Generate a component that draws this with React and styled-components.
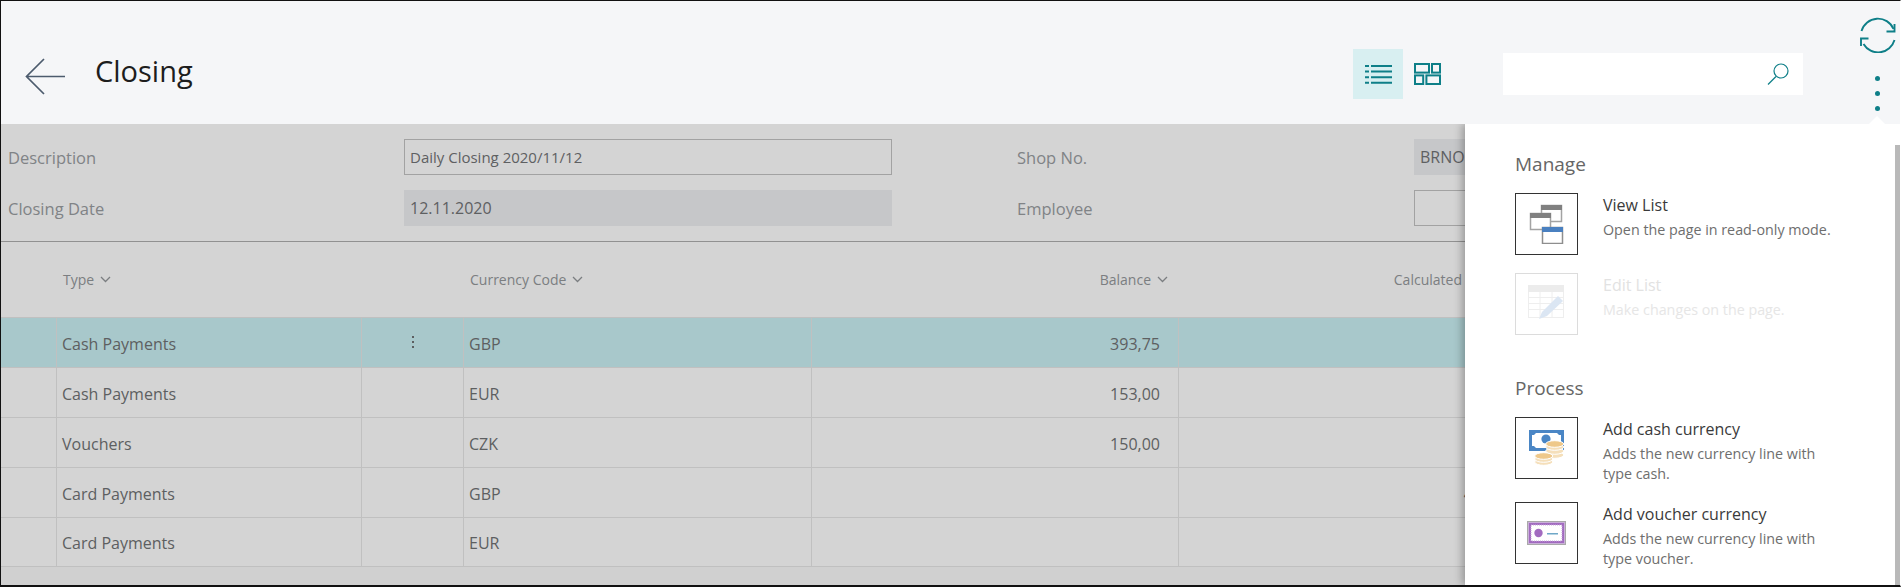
import styled, { createGlobalStyle } from 'styled-components'

const GlobalStyle = createGlobalStyle`
    * { box-sizing: border-box; }
    body {
        margin: 0;
        background: white;
        font-family: "Open Sans", "Liberation Sans", sans-serif;
    }
`

const Frame = styled.div`
    position: relative;
    width: 1901px;
    height: 587px;
    border-style: solid;
    border-color: #111;
    border-width: 1px 1px 2px 1px;
    border-right-color: white;
    background: #d4d4d4;
    overflow: hidden;
`

const Header = styled.header`
    position: relative;
    z-index: 2;
    display: flex;
    align-items: flex-start;
    height: 123px;
    background: #f5f6f8;
`
const BackButton = styled.div`
    display: flex;
    margin: 57px 29px 0 24px;
`
const Title = styled.h1`
    margin: 48px 0 0;
    font-size: 29px;
    line-height: 44px;
    font-weight: 400;
    color: #1d1d1d;
`
const ViewSwitch = styled.div`
    display: flex;
    align-items: center;
    gap: 11px;
    margin: 48px 0 0 auto;
`
const ViewButton = styled.div`
    display: flex;
    align-items: center;
    justify-content: center;
    width: ${p => p.$active ? '50px' : '27px'};
    height: 50px;
    background: ${p => p.$active ? '#d8eff1' : 'transparent'};
`
const Search = styled.div`
    display: flex;
    align-items: center;
    justify-content: flex-end;
    width: 300px;
    height: 42px;
    margin: 52px 57px 0 62px;
    padding-right: 14px;
    background: white;
`
const SyncColumn = styled.div`
    position: relative;
    display: flex;
    flex-direction: column;
    align-items: center;
    width: 35px;
    margin: 16px 5px 0 0;
`
const Dots = styled.div`
    display: flex;
    flex-direction: column;
    gap: 10px;
    margin-top: 23px;
    &::after {
        content: '';
        position: absolute;
        left: 9px;
        top: 99px;
        border-left: 8px solid transparent;
        border-right: 8px solid transparent;
        border-bottom: 8px solid white;
    }
`
const Dot = styled.span`
    width: 5px;
    height: 5px;
    border-radius: 50%;
    background: #0e7f88;
`

const Form = styled.div`
    display: grid;
    grid-template-columns: 396px 488px 125px 397px 488px;
    grid-auto-rows: 36px;
    row-gap: 15px;
    align-items: center;
    width: 1900px;
    padding: 15px 0 15px 7px;
    border-bottom: 1px solid #919191;
    height: 118px;
`
const Label = styled.div`
    font-size: 16.5px;
    color: #808386;
`
const Field = styled.div`
    display: flex;
    align-items: center;
    height: 36px;
    padding-left: 5px;
    font-size: ${p => p.$readOnly ? '16px' : '15px'};
    color: #5e6062;
    border: 1px solid ${p => p.$readOnly ? '#c6c7c9' : '#a2a2a2'};
    background: ${p => p.$readOnly ? '#c6c7c9' : 'transparent'};
`

const Grid = styled.div`
    display: flex;
    flex-direction: column;
`
const Row = styled.div`
    display: grid;
    grid-template-columns: 56px 305px 102px 348px 367px 367px;
    height: 50px;
    width: 1900px;
    background: ${p => p.$selected ? '#a8c8cb' : '#d4d4d4'};
    &:last-child { height: 49px; }
`
const HeadRow = styled(Row)`
    height: 76px;
    border-bottom: 1px solid #c0c0c0;
`
const HeadCell = styled.div`
    display: flex;
    align-items: center;
    justify-content: ${p => p.$right ? 'flex-end' : 'flex-start'};
    gap: 6px;
    padding: 0 ${p => p.$right ? '11px' : '0'} 0 ${p => p.$right ? '0' : '6px'};
    font-size: 14px;
    white-space: nowrap;
    color: #7b7e81;
`
const Cell = styled.div`
    display: flex;
    align-items: center;
    justify-content: ${p => p.$right ? 'flex-end' : 'flex-start'};
    padding: 2px ${p => p.$right ? '18px' : '0'} 0 ${p => p.$right ? '0' : '5px'};
    font-size: 16px;
    color: #5d5f61;
    border-right: 1px solid #c0c0c0;
    border-bottom: 1px solid #c0c0c0;
`
const MoreCell = styled(Cell)`
    justify-content: center;
    padding: 0 0 2px;
    gap: 3px;
    flex-direction: column;
`
const SmallDot = styled.span`
    width: 2px;
    height: 2px;
    background: #5d5f61;
`
const GridFooter = styled.div`
    height: 18px;
    background: #d0d0d0;
`

const Panel = styled.aside`
    position: absolute;
    z-index: 1;
    top: 123px;
    right: 0;
    bottom: 0;
    width: 435px;
    display: flex;
    background: white;
    box-shadow: -3px 0 8px rgba(0, 0, 0, 0.28);
`
const PanelBody = styled.div`
    flex: 1;
    padding: 28px 0 0 50px;
`
const Scrollbar = styled.div`
    width: 5px;
    margin-top: 21px;
    background: #b9b9b9;
`
const Section = styled.section`
    margin-bottom: 41px;
`
const SectionTitle = styled.h2`
    margin: 0 0 17px;
    font-size: 19px;
    line-height: 24px;
    font-weight: 400;
    color: #666;
`
const Action = styled.div`
    display: flex;
    align-items: flex-start;
    gap: 25px;
    margin-bottom: 18px;
`
const Tile = styled.div`
    flex: none;
    display: flex;
    align-items: center;
    justify-content: center;
    width: 63px;
    height: 62px;
    border: 1px solid ${p => p.$disabled ? '#dcdcdc' : '#333'};
`
const ActionText = styled.div`
    width: 232px;
`
const ActionTitle = styled.div`
    font-size: 16px;
    line-height: 24px;
    margin-bottom: 3px;
    color: ${p => p.$disabled ? '#e2e2e2' : '#3a3a3a'};
`
const ActionDesc = styled.div`
    font-size: 14.3px;
    line-height: 20px;
    color: ${p => p.$disabled ? '#e6e6e6' : '#6e6e6e'};
`

const Chevron = () => (
    <svg width="11" height="7" viewBox="0 0 11 7" fill="none" stroke="#7b7e81" strokeWidth="1.3">
        <path d="M1 1l4.5 4.5L10 1" />
    </svg>
)

const BackArrow = () => (
    <svg width="41" height="37" viewBox="0 0 41 37" fill="none" stroke="#4c5b6d" strokeWidth="1.7">
        <path d="M40 18.5H2M19 1L1.5 18.5 19 36" />
    </svg>
)

const ListIcon = () => (
    <svg width="27" height="20" viewBox="0 0 27 20" fill="#0e7f88">
        <path d="M0 1h4v2H0zM6 1h21v2H6zM0 6.6h4v2H0zM6 6.6h21v2H6zM0 12.2h4v2H0zM6 12.2h21v2H6zM0 17.8h4v2H0zM6 17.8h21v2H6z" />
    </svg>
)

const TilesIcon = () => (
    <svg width="27" height="22" viewBox="0 0 27 22" fill="none" stroke="#0e7f88" strokeWidth="2">
        <rect x="1" y="1" width="14" height="8.6" />
        <rect x="18" y="1" width="8" height="8.6" />
        <rect x="1" y="12.4" width="8.2" height="8.6" />
        <rect x="12.4" y="12.4" width="13.6" height="8.6" />
    </svg>
)

const SearchIcon = () => (
    <svg width="22" height="22" viewBox="0 0 22 22" fill="none" stroke="#0e7f88" strokeWidth="1.2">
        <circle cx="14" cy="8" r="7" />
        <path d="M9 13.5L1 21.5" />
    </svg>
)

const SyncIcon = () => (
    <svg width="36" height="36" viewBox="0 0 36 36" fill="none" stroke="#0e7f88" strokeWidth="1.9">
        <path d="M1.5 14A17 17 0 0 1 33.5 12" />
        <path d="M26.5 14.5H34.5V7" />
        <path d="M34.5 23A17 17 0 0 1 3.5 27" />
        <path d="M8.5 21.5H1V29" />
    </svg>
)

const ViewListArt = () => (
    <svg width="36" height="40" viewBox="0 0 36 40">
        <rect x="12.5" y="1.5" width="20" height="16" fill="white" stroke="#a3a3a3" strokeWidth="1.5" />
        <rect x="12" y="1" width="21" height="5" fill="#808080" />
        <rect x="1.5" y="9.5" width="20" height="16" fill="white" stroke="#a3a3a3" strokeWidth="1.5" />
        <rect x="1" y="9" width="21" height="5" fill="#808080" />
        <rect x="13.5" y="23.5" width="20" height="16" fill="white" stroke="#8e8e8e" strokeWidth="1.5" />
        <rect x="13" y="23" width="21" height="5" fill="#4a80c0" />
    </svg>
)

const EditListArt = () => (
    <svg width="37" height="38" viewBox="0 0 37 38">
        <rect x="0.5" y="0.5" width="35" height="32" fill="white" stroke="#eeeeee" />
        <rect x="0" y="0" width="36" height="7" fill="#ececec" />
        <path d="M0 12.5h36M0 18.5h36M0 24.5h36M12 7v26M24 7v26" stroke="#eeeeee" fill="none" />
        <path d="M11 34l3-7L30 11l5 5-16 15z" fill="#dbe6f3" />
    </svg>
)

const CoinStack = ({ x, levels }) => (
    <g stroke="white" strokeWidth="1">
        {levels.map((y, i) => (
            <ellipse key={y} cx={x} cy={y} rx="9" ry="3.3" fill={i === levels.length - 1 ? '#eec88a' : '#f5dfba'} />
        ))}
    </g>
)

const CashArt = () => (
    <svg width="36" height="36" viewBox="0 0 36 36">
        <rect x="0" y="0" width="35" height="21" fill="#4a86c5" />
        <path d="M3 5h2l2-2h21l2 2h2v11h-2l-2 2H7l-2-2H3z" fill="white" />
        <circle cx="17" cy="9" r="4.6" fill="#4a86c5" />
        <CoinStack x={25.7} levels={[25, 21, 17, 14]} />
        <CoinStack x={14.7} levels={[32, 29, 26]} />
    </svg>
)

const VoucherArt = () => (
    <svg width="39" height="24" viewBox="0 0 39 24">
        <rect x="0.5" y="0.5" width="38" height="23" fill="#c9b0d8" stroke="#a9a9a9" />
        <rect x="2" y="2" width="35" height="20" fill="#a26bc0" />
        <rect x="4" y="4" width="31" height="16" fill="white" stroke="#c7a6da" strokeDasharray="1 1" />
        <circle cx="11.5" cy="12" r="4.2" fill="#a26bc0" />
        <rect x="20" y="12" width="11" height="1.5" fill="#6fa8c8" />
    </svg>
)

const rows = [
    { type: 'Cash Payments', currency: 'GBP', balance: '393,75', selected: true },
    { type: 'Cash Payments', currency: 'EUR', balance: '153,00' },
    { type: 'Vouchers', currency: 'CZK', balance: '150,00' },
    { type: 'Card Payments', currency: 'GBP', balance: '', calculated: '4 320,00' },
    { type: 'Card Payments', currency: 'EUR', balance: '' },
]

const App = () => {
    return (
    <Frame>
        <GlobalStyle />
        <Header>
            <BackButton><BackArrow /></BackButton>
            <Title>Closing</Title>
            <ViewSwitch>
                <ViewButton $active><ListIcon /></ViewButton>
                <ViewButton><TilesIcon /></ViewButton>
            </ViewSwitch>
            <Search><SearchIcon /></Search>
            <SyncColumn>
                <SyncIcon />
                <Dots><Dot /><Dot /><Dot /></Dots>
            </SyncColumn>
        </Header>
        <Form>
            <Label>Description</Label>
            <Field>Daily Closing 2020/11/12</Field>
            <div />
            <Label>Shop No.</Label>
            <Field $readOnly>BRNO</Field>
            <Label>Closing Date</Label>
            <Field $readOnly>12.11.2020</Field>
            <div />
            <Label>Employee</Label>
            <Field />
        </Form>
        <Grid>
            <HeadRow>
                <HeadCell />
                <HeadCell>Type <Chevron /></HeadCell>
                <HeadCell />
                <HeadCell>Currency Code <Chevron /></HeadCell>
                <HeadCell $right>Balance <Chevron /></HeadCell>
                <HeadCell $right>Calculated Amount <Chevron /></HeadCell>
            </HeadRow>
            {rows.map((row, i) => (
                <Row key={i} $selected={row.selected}>
                    <Cell />
                    <Cell>{row.type}</Cell>
                    {row.selected
                        ? <MoreCell><SmallDot /><SmallDot /><SmallDot /></MoreCell>
                        : <Cell />}
                    <Cell>{row.currency}</Cell>
                    <Cell $right>{row.balance}</Cell>
                    <Cell $right>{row.calculated}</Cell>
                </Row>
            ))}
        </Grid>
        <GridFooter />
        <Panel>
            <PanelBody>
                <Section>
                    <SectionTitle>Manage</SectionTitle>
                    <Action>
                        <Tile><ViewListArt /></Tile>
                        <ActionText>
                            <ActionTitle>View List</ActionTitle>
                            <ActionDesc>Open the page in read-only mode.</ActionDesc>
                        </ActionText>
                    </Action>
                    <Action>
                        <Tile $disabled><EditListArt /></Tile>
                        <ActionText>
                            <ActionTitle $disabled>Edit List</ActionTitle>
                            <ActionDesc $disabled>Make changes on the page.</ActionDesc>
                        </ActionText>
                    </Action>
                </Section>
                <Section>
                    <SectionTitle>Process</SectionTitle>
                    <Action>
                        <Tile><CashArt /></Tile>
                        <ActionText>
                            <ActionTitle>Add cash currency</ActionTitle>
                            <ActionDesc>Adds the new currency line with type cash.</ActionDesc>
                        </ActionText>
                    </Action>
                    <Action>
                        <Tile><VoucherArt /></Tile>
                        <ActionText>
                            <ActionTitle>Add voucher currency</ActionTitle>
                            <ActionDesc>Adds the new currency line with type voucher.</ActionDesc>
                        </ActionText>
                    </Action>
                </Section>
            </PanelBody>
            <Scrollbar />
        </Panel>
    </Frame>
  )
}

export default App
